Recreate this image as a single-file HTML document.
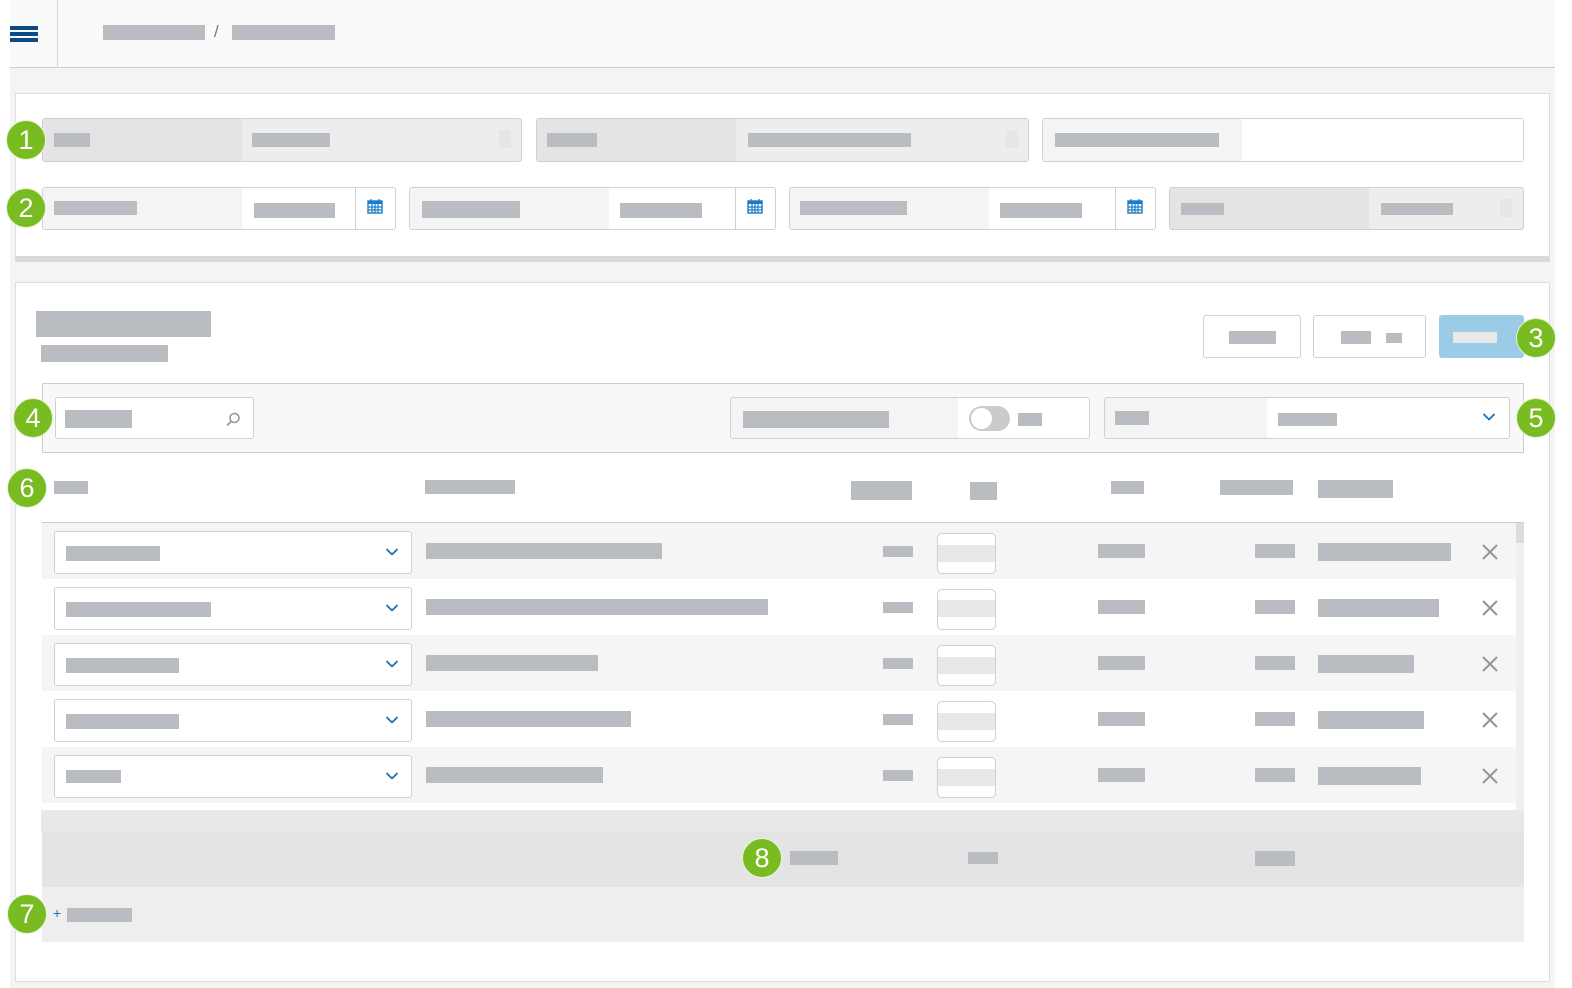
<!DOCTYPE html>
<html><head><meta charset="utf-8"><style>
*{margin:0;padding:0;box-sizing:border-box}
html{width:1572px;height:988px;overflow:hidden}
body{width:1572px;height:988px;background:#fff;position:relative;overflow:hidden;font-family:"Liberation Sans",sans-serif}
.a{position:absolute}
.b{position:absolute;background:#b9bcc1}
.f{position:absolute;border:1px solid #d0d0d0;border-radius:3px;overflow:hidden}
.badge{position:absolute;width:40px;height:40px;border-radius:50%;background:#78bc22;color:#fff;font-size:27px;line-height:38px;text-align:center;border:1px solid #e8f3da}
.cal{position:absolute;width:16px;height:16px}
</style></head><body>
<div class="a" style="left:10px;top:0;width:1545px;height:988px;background:#f4f4f4"></div>
<div class="a" style="left:10px;top:0;width:1545px;height:68px;background:#fafafa;border-bottom:1px solid #cfcfcf"></div>
<div class="a" style="left:57px;top:0;width:1px;height:68px;background:#d5d5d5"></div>
<div class="a" style="left:10px;top:26px;width:28px;height:4px;background:#0b4a85"></div>
<div class="a" style="left:10px;top:32px;width:28px;height:4px;background:#0b4a85"></div>
<div class="a" style="left:10px;top:38px;width:28px;height:4px;background:#0b4a85"></div>
<div class="b" style="left:103px;top:25px;width:102px;height:15px"></div>
<div class="a" style="left:214px;top:22px;font-size:17px;color:#777">/</div>
<div class="b" style="left:232px;top:25px;width:103px;height:15px"></div>

<div class="a" style="left:15px;top:93px;width:1535px;height:169px;background:#fff;border:1px solid #ddd;border-bottom:6px solid #d9d9d9"></div>
<div class="f" style="left:42px;top:118px;width:480px;height:44px;background:#ededed"><div class="a" style="left:0;top:0;width:199px;height:44px;background:#e4e4e4"></div><div class="a" style="left:456px;top:11px;width:12px;height:18px;background:#e6e6e6"></div></div>
<div class="b" style="left:54px;top:133px;width:36px;height:14px"></div><div class="b" style="left:252px;top:133px;width:78px;height:14px"></div>
<div class="f" style="left:536px;top:118px;width:493px;height:44px;background:#ededed"><div class="a" style="left:0;top:0;width:199px;height:44px;background:#e4e4e4"></div><div class="a" style="left:469px;top:11px;width:12px;height:18px;background:#e6e6e6"></div></div>
<div class="b" style="left:547px;top:133px;width:50px;height:14px"></div><div class="b" style="left:748px;top:133px;width:163px;height:14px"></div>
<div class="f" style="left:1042px;top:118px;width:482px;height:44px;background:#fff"><div class="a" style="left:0;top:0;width:199px;height:44px;background:#f4f4f4"></div></div>
<div class="b" style="left:1055px;top:133px;width:164px;height:14px"></div>

<div class="f" style="left:42px;top:187px;width:354px;height:43px;background:#fff"><div class="a" style="left:0;top:0;width:199px;height:43px;background:#f4f4f4"></div><div class="a" style="left:312px;top:0;width:1px;height:43px;background:#d0d0d0"></div></div>
<div class="f" style="left:409px;top:187px;width:367px;height:43px;background:#fff"><div class="a" style="left:0;top:0;width:199px;height:43px;background:#f4f4f4"></div><div class="a" style="left:325px;top:0;width:1px;height:43px;background:#d0d0d0"></div></div>
<div class="f" style="left:789px;top:187px;width:367px;height:43px;background:#fff"><div class="a" style="left:0;top:0;width:199px;height:43px;background:#f4f4f4"></div><div class="a" style="left:325px;top:0;width:1px;height:43px;background:#d0d0d0"></div></div>
<div class="f" style="left:1169px;top:187px;width:355px;height:43px;background:#ededed"><div class="a" style="left:0;top:0;width:199px;height:43px;background:#e4e4e4"></div><div class="a" style="left:330px;top:11px;width:12px;height:18px;background:#e6e6e6"></div></div>
<div class="b" style="left:54px;top:201px;width:83px;height:14px"></div><div class="b" style="left:254px;top:203px;width:81px;height:15px"></div>
<div class="b" style="left:422px;top:201px;width:98px;height:17px"></div><div class="b" style="left:620px;top:203px;width:82px;height:15px"></div>
<div class="b" style="left:800px;top:201px;width:107px;height:14px"></div><div class="b" style="left:1000px;top:203px;width:82px;height:15px"></div>
<div class="b" style="left:1181px;top:203px;width:43px;height:12px"></div><div class="b" style="left:1381px;top:203px;width:72px;height:12px"></div>
<svg class="cal" style="left:367px;top:198px" viewBox="0 0 16 16"><rect x="1" y="3" width="14" height="12" fill="#fff" stroke="#1a7cc8" stroke-width="1.4"/><rect x="1" y="3" width="14" height="3" fill="#1a7cc8"/><path d="M4 1v4M12 1v4M1 9h14M1 12h14M5 6v9M8 6v9M11 6v9" stroke="#1a7cc8" stroke-width="1.2"/></svg>
<svg class="cal" style="left:747px;top:198px" viewBox="0 0 16 16"><rect x="1" y="3" width="14" height="12" fill="#fff" stroke="#1a7cc8" stroke-width="1.4"/><rect x="1" y="3" width="14" height="3" fill="#1a7cc8"/><path d="M4 1v4M12 1v4M1 9h14M1 12h14M5 6v9M8 6v9M11 6v9" stroke="#1a7cc8" stroke-width="1.2"/></svg>
<svg class="cal" style="left:1127px;top:198px" viewBox="0 0 16 16"><rect x="1" y="3" width="14" height="12" fill="#fff" stroke="#1a7cc8" stroke-width="1.4"/><rect x="1" y="3" width="14" height="3" fill="#1a7cc8"/><path d="M4 1v4M12 1v4M1 9h14M1 12h14M5 6v9M8 6v9M11 6v9" stroke="#1a7cc8" stroke-width="1.2"/></svg>

<div class="a" style="left:15px;top:282px;width:1535px;height:700px;background:#fff;border:1px solid #ddd"></div>
<div class="b" style="left:36px;top:311px;width:175px;height:26px"></div>
<div class="b" style="left:41px;top:345px;width:127px;height:17px"></div>
<div class="f" style="left:1203px;top:315px;width:98px;height:43px;background:#fff"></div><div class="b" style="left:1229px;top:331px;width:47px;height:13px"></div>
<div class="f" style="left:1313px;top:315px;width:113px;height:43px;background:#fff"></div><div class="b" style="left:1341px;top:331px;width:30px;height:13px"></div><div class="b" style="left:1386px;top:333px;width:16px;height:10px"></div>
<div class="a" style="left:1439px;top:315px;width:85px;height:43px;background:#9bcbe6;border-radius:3px"></div><div class="a" style="left:1453px;top:332px;width:44px;height:11px;background:#e8e8e8"></div>

<div class="a" style="left:42px;top:383px;width:1482px;height:70px;background:#f8f8f8;border:1px solid #ccc"></div>
<div class="f" style="left:55px;top:397px;width:199px;height:42px;background:#fff"></div>
<div class="b" style="left:65px;top:410px;width:67px;height:18px"></div>
<svg class="a" style="left:224px;top:411px" width="18" height="18" viewBox="0 0 18 18"><circle cx="10.5" cy="7" r="4.5" fill="none" stroke="#999" stroke-width="1.6"/><path d="M7.3 10.2L3 14.5" stroke="#999" stroke-width="1.8"/></svg>
<div class="f" style="left:730px;top:397px;width:360px;height:42px;background:#fff"><div class="a" style="left:0;top:0;width:227px;height:42px;background:#f4f4f4"></div></div>
<div class="b" style="left:743px;top:411px;width:146px;height:17px"></div>
<div class="a" style="left:969px;top:406px;width:41px;height:25px;border-radius:13px;background:#cbcbcb"></div><div class="a" style="left:971px;top:408px;width:21px;height:21px;border-radius:50%;background:#fff"></div>
<div class="b" style="left:1018px;top:413px;width:24px;height:13px"></div>
<div class="f" style="left:1104px;top:397px;width:406px;height:42px;background:#fff"><div class="a" style="left:0;top:0;width:162px;height:42px;background:#f4f4f4"></div></div>
<div class="b" style="left:1115px;top:411px;width:34px;height:14px"></div><div class="b" style="left:1278px;top:413px;width:59px;height:13px"></div>
<svg class="a" style="left:1482px;top:412px" width="14" height="10" viewBox="0 0 14 10"><path d="M1.5 2l5.5 5.5L12.5 2" fill="none" stroke="#1a6fb8" stroke-width="1.8"/></svg>

<div class="b" style="left:54px;top:481px;width:34px;height:13px"></div>
<div class="b" style="left:425px;top:480px;width:90px;height:14px"></div>
<div class="b" style="left:851px;top:481px;width:61px;height:19px"></div>
<div class="b" style="left:970px;top:482px;width:27px;height:18px"></div>
<div class="b" style="left:1111px;top:481px;width:33px;height:13px"></div>
<div class="b" style="left:1220px;top:480px;width:73px;height:15px"></div>
<div class="b" style="left:1318px;top:480px;width:75px;height:18px"></div>

<div class="a" style="left:42px;top:522px;width:1482px;height:1px;background:#ccc"></div>
<div class="a" style="left:1516px;top:523px;width:8px;height:287px;background:#f0f0f0"></div>
<div class="a" style="left:1516px;top:523px;width:8px;height:20px;background:#dcdcdc"></div>

<div class="a" style="left:42px;top:523px;width:1474px;height:56px;background:#f5f5f5"></div>
<div class="a" style="left:42px;top:635px;width:1474px;height:56px;background:#f5f5f5"></div>
<div class="a" style="left:42px;top:747px;width:1474px;height:56px;background:#f5f5f5"></div>

<div class="f" style="left:54px;top:531px;width:358px;height:43px;background:#fff"></div><div class="b" style="left:66px;top:546px;width:94px;height:15px"></div>
<div class="f" style="left:54px;top:587px;width:358px;height:43px;background:#fff"></div><div class="b" style="left:66px;top:602px;width:145px;height:15px"></div>
<div class="f" style="left:54px;top:643px;width:358px;height:43px;background:#fff"></div><div class="b" style="left:66px;top:658px;width:113px;height:15px"></div>
<div class="f" style="left:54px;top:699px;width:358px;height:43px;background:#fff"></div><div class="b" style="left:66px;top:714px;width:113px;height:15px"></div>
<div class="f" style="left:54px;top:755px;width:358px;height:43px;background:#fff"></div><div class="b" style="left:66px;top:770px;width:55px;height:13px"></div>

<div class="b" style="left:426px;top:543px;width:236px;height:16px"></div>
<div class="b" style="left:426px;top:599px;width:342px;height:16px"></div>
<div class="b" style="left:426px;top:655px;width:172px;height:16px"></div>
<div class="b" style="left:426px;top:711px;width:205px;height:16px"></div>
<div class="b" style="left:426px;top:767px;width:177px;height:16px"></div>

<div class="b" style="left:883px;top:546px;width:30px;height:11px"></div>
<div class="b" style="left:883px;top:602px;width:30px;height:11px"></div>
<div class="b" style="left:883px;top:658px;width:30px;height:11px"></div>
<div class="b" style="left:883px;top:714px;width:30px;height:11px"></div>
<div class="b" style="left:883px;top:770px;width:30px;height:11px"></div>

<div class="f" style="left:937px;top:533px;width:59px;height:41px;background:#fff;border-radius:5px"><div class="a" style="left:0;top:11px;width:59px;height:17px;background:#e8e8e8"></div></div>
<div class="f" style="left:937px;top:589px;width:59px;height:41px;background:#fff;border-radius:5px"><div class="a" style="left:0;top:10px;width:59px;height:17px;background:#e8e8e8"></div></div>
<div class="f" style="left:937px;top:645px;width:59px;height:41px;background:#fff;border-radius:5px"><div class="a" style="left:0;top:11px;width:59px;height:17px;background:#e8e8e8"></div></div>
<div class="f" style="left:937px;top:701px;width:59px;height:41px;background:#fff;border-radius:5px"><div class="a" style="left:0;top:11px;width:59px;height:17px;background:#e8e8e8"></div></div>
<div class="f" style="left:937px;top:757px;width:59px;height:41px;background:#fff;border-radius:5px"><div class="a" style="left:0;top:11px;width:59px;height:17px;background:#e8e8e8"></div></div>

<div class="b" style="left:1098px;top:544px;width:47px;height:14px"></div>
<div class="b" style="left:1098px;top:600px;width:47px;height:14px"></div>
<div class="b" style="left:1098px;top:656px;width:47px;height:14px"></div>
<div class="b" style="left:1098px;top:712px;width:47px;height:14px"></div>
<div class="b" style="left:1098px;top:768px;width:47px;height:14px"></div>

<div class="b" style="left:1255px;top:544px;width:40px;height:14px"></div>
<div class="b" style="left:1255px;top:600px;width:40px;height:14px"></div>
<div class="b" style="left:1255px;top:656px;width:40px;height:14px"></div>
<div class="b" style="left:1255px;top:712px;width:40px;height:14px"></div>
<div class="b" style="left:1255px;top:768px;width:40px;height:14px"></div>

<div class="b" style="left:1318px;top:543px;width:133px;height:18px"></div>
<div class="b" style="left:1318px;top:599px;width:121px;height:18px"></div>
<div class="b" style="left:1318px;top:655px;width:96px;height:18px"></div>
<div class="b" style="left:1318px;top:711px;width:106px;height:18px"></div>
<div class="b" style="left:1318px;top:767px;width:103px;height:18px"></div>

<svg class="a" style="left:1481px;top:543px" width="18" height="18" viewBox="0 0 18 18"><path d="M2 2l14 14M16 2L2 16" stroke="#999" stroke-width="2.2"/></svg>
<svg class="a" style="left:1481px;top:599px" width="18" height="18" viewBox="0 0 18 18"><path d="M2 2l14 14M16 2L2 16" stroke="#999" stroke-width="2.2"/></svg>
<svg class="a" style="left:1481px;top:655px" width="18" height="18" viewBox="0 0 18 18"><path d="M2 2l14 14M16 2L2 16" stroke="#999" stroke-width="2.2"/></svg>
<svg class="a" style="left:1481px;top:711px" width="18" height="18" viewBox="0 0 18 18"><path d="M2 2l14 14M16 2L2 16" stroke="#999" stroke-width="2.2"/></svg>
<svg class="a" style="left:1481px;top:767px" width="18" height="18" viewBox="0 0 18 18"><path d="M2 2l14 14M16 2L2 16" stroke="#999" stroke-width="2.2"/></svg>

<svg class="a" style="left:385px;top:547px" width="14" height="10" viewBox="0 0 14 10"><path d="M1.5 2l5.5 5.5L12.5 2" fill="none" stroke="#1a6fb8" stroke-width="1.8"/></svg>
<svg class="a" style="left:385px;top:603px" width="14" height="10" viewBox="0 0 14 10"><path d="M1.5 2l5.5 5.5L12.5 2" fill="none" stroke="#1a6fb8" stroke-width="1.8"/></svg>
<svg class="a" style="left:385px;top:659px" width="14" height="10" viewBox="0 0 14 10"><path d="M1.5 2l5.5 5.5L12.5 2" fill="none" stroke="#1a6fb8" stroke-width="1.8"/></svg>
<svg class="a" style="left:385px;top:715px" width="14" height="10" viewBox="0 0 14 10"><path d="M1.5 2l5.5 5.5L12.5 2" fill="none" stroke="#1a6fb8" stroke-width="1.8"/></svg>
<svg class="a" style="left:385px;top:771px" width="14" height="10" viewBox="0 0 14 10"><path d="M1.5 2l5.5 5.5L12.5 2" fill="none" stroke="#1a6fb8" stroke-width="1.8"/></svg>

<div class="a" style="left:41px;top:810px;width:1483px;height:22px;background:#e8e8e8"></div>
<div class="a" style="left:42px;top:832px;width:1482px;height:55px;background:#e4e4e4"></div>
<div class="b" style="left:790px;top:851px;width:48px;height:14px"></div>
<div class="b" style="left:968px;top:852px;width:30px;height:12px"></div>
<div class="b" style="left:1255px;top:851px;width:40px;height:15px"></div>
<div class="a" style="left:42px;top:887px;width:1482px;height:55px;background:#eeeeee"></div>
<div class="a" style="left:53px;top:905px;font-size:14px;color:#1a6fb8">+</div>
<div class="b" style="left:67px;top:908px;width:65px;height:14px"></div>

<div class="badge" style="left:6px;top:120px">1</div>
<div class="badge" style="left:6px;top:188px">2</div>
<div class="badge" style="left:1516px;top:318px">3</div>
<div class="badge" style="left:13px;top:398px">4</div>
<div class="badge" style="left:1516px;top:398px">5</div>
<div class="badge" style="left:7px;top:468px">6</div>
<div class="badge" style="left:7px;top:894px">7</div>
<div class="badge" style="left:742px;top:838px">8</div>
</body></html>
